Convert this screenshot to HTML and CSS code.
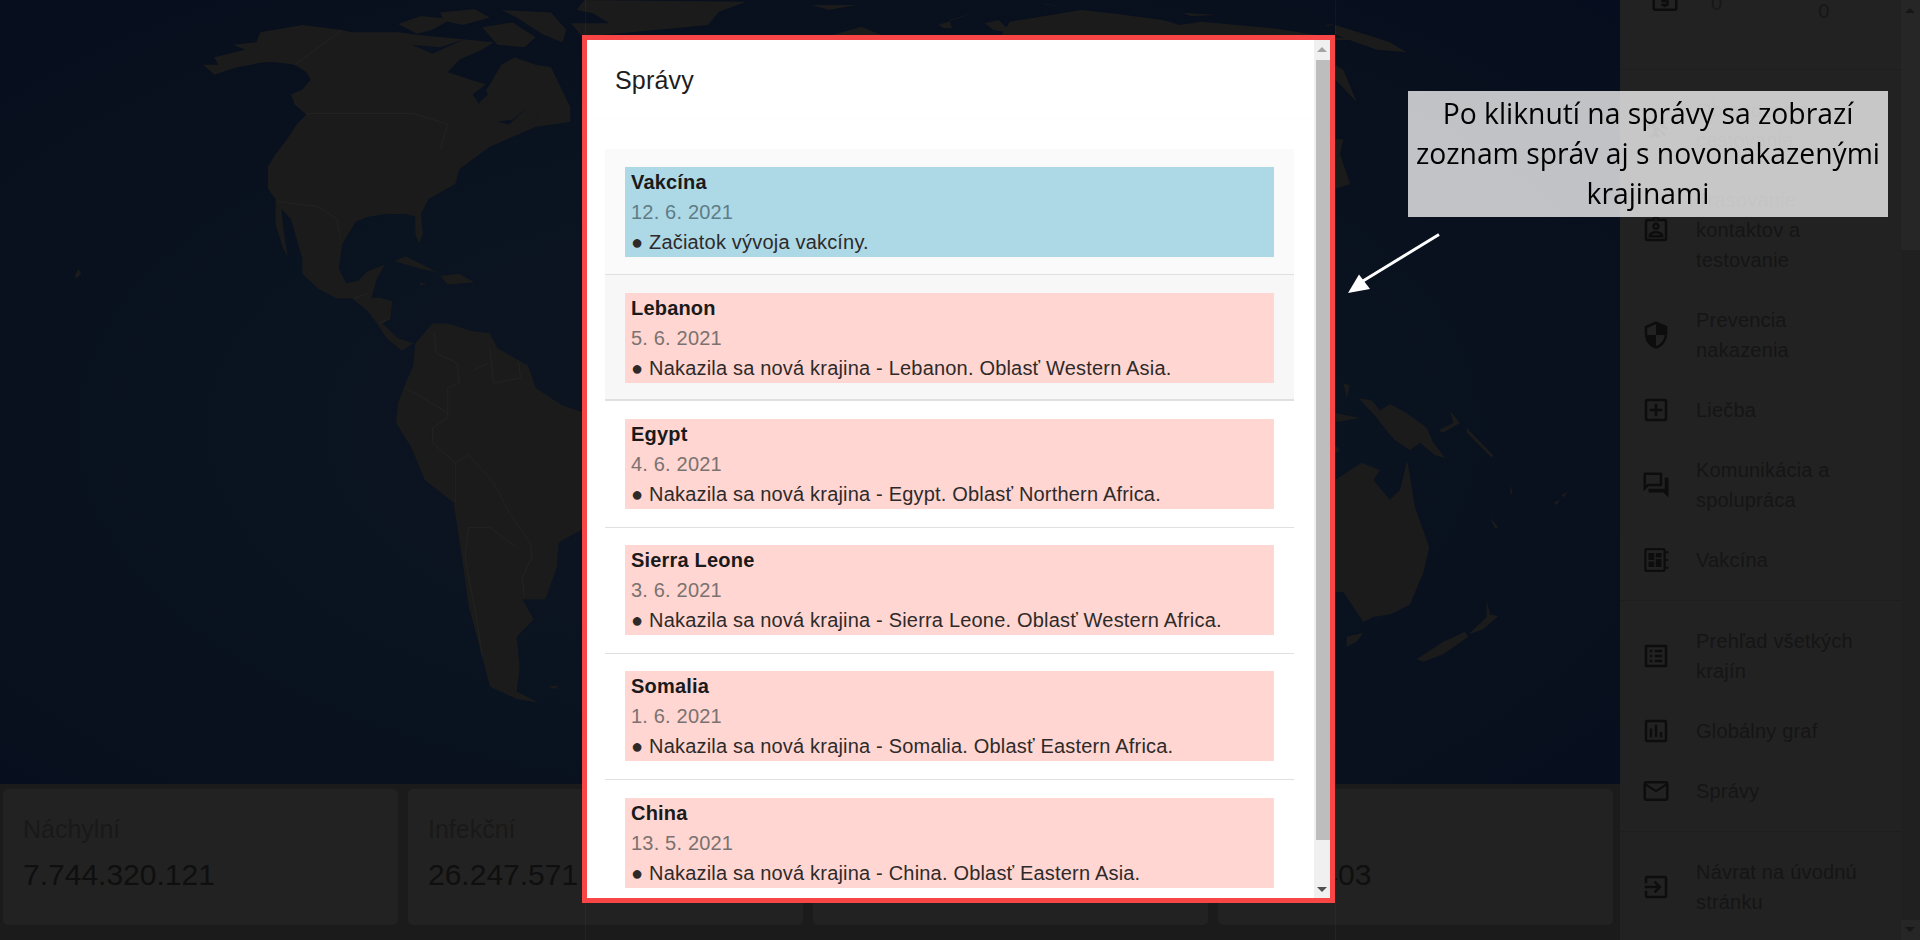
FILE: index.html
```html
<!DOCTYPE html>
<html lang="sk">
<head>
    <meta charset="UTF-8">
    <meta name="viewport" content="width=device-width, initial-scale=1.0">
    <title>Správy</title>
    <link rel="stylesheet" href="styles.css">
</head>
<body>

    <div class="app">
        <main class="main">
            <div class="map">
                <svg class="map-svg" viewBox="0 0 1620 784" aria-hidden="true">
                    <!-- Americas -->
                    <g transform="scale(.3827,.4975)">
                        <path class="land" d="M470 178L560 150 620 135 690 125 720 125 770 130 800 145 812 160 790 180 760 190 770 210 800 230 775 250 750 280 720 310 700 335 700 380 720 400 720 450 740 500 752 515 742 470 735 420 760 440 790 520 790 550 830 580 880 600 920 600 960 625 985 650 1010 680 1050 705 1080 690 1060 685 1040 680 1000 650 1020 640 1025 605 990 598 970 600 985 560 1005 532 960 545 935 565 905 570 885 540 895 490 930 445 965 435 1010 430 1060 430 1085 435 1085 470 1095 490 1105 470 1100 430 1120 400 1190 370 1200 340 1280 295 1340 275 1400 255 1490 245 1490 215 1440 135 1400 130 1345 115 1310 130 1280 170 1250 205 1235 190 1270 170 1170 145 1200 120 1260 100 1290 85 1090 70 1040 65 920 65 890 60 790 50 680 65 670 85 610 90 640 100 560 115 570 130 530 130 560 150z"/>
                        <path class="land" d="M1040 48L1100 32 1180 38 1130 60 1090 68zM1150 25L1240 18 1280 35 1210 50 1160 42zM1260 55L1340 45 1400 75 1370 95 1300 90zM1310 20L1440 25 1480 60 1470 85 1420 70 1350 35z"/>
                        <path class="land" d="M1030 525L1060 515 1100 530 1145 548 1100 540zM1150 555L1200 550 1240 568 1170 572zM1095 568L1115 570 1100 574zM200 560L212 550 205 540 195 555zM1430 1380L1460 1378 1450 1385zM1370 250L1410 225 1390 260z"/>
                        <path class="land" d="M1085 690L1130 650 1170 650 1230 665 1280 670 1300 700 1380 735 1400 780 1470 815 1530 830 1570 900 1570 1000 1520 1065 1460 1090 1455 1140 1425 1205 1365 1205 1395 1245 1350 1280 1358 1340 1350 1390 1408 1412 1350 1405 1280 1380 1260 1320 1225 1220 1205 1110 1185 1010 1110 965 1075 900 1035 850 1040 810 1060 770 1080 735z"/>
                        <path class="border" d="M895 60L770 130M800 228H1080L1170 250 1150 300M725 405L830 415 880 440 890 480M925 600L960 590M990 650L1020 640M1135 670L1140 710 1195 730 1200 770 1170 780 1170 840 1130 860 1130 890 1190 930 1190 1010M1060 780L1105 800 1170 830M1190 930L1225 915 1290 970 1330 1030 1385 1090 1390 1120 1365 1160 1370 1200M1225 1060L1280 1060 1350 1100M1225 1060L1215 1120 1245 1240 1260 1320M1280 700L1290 770 1360 760 1355 725M1235 745L1275 730"/>
                        <!-- lakes and the gulf of St. Lawrence -->
                        <path class="water" d="M1240 190L1265 172 1275 190 1250 208zM1155 1400L1160 1400zM1300 245L1340 240 1380 215 1330 250zM1075 90L1150 95 1210 80 1130 108z"/>
                    </g>
                    <!-- Greenland, Europe and Asia above the dialog -->
                    <g transform="translate(560,0) scale(.5484,.3333)">
                        <path class="land" d="M45 0L340 5 290 35 270 75 110 100 60 108 40 108 20 70 90 70 60 40 30 30zM460 15L540 15 490 30zM490 108L550 80 590 108zM690 75L760 35 710 60 715 85 700 85zM775 70L800 60 825 100 790 90zM820 65L950 30 1005 40 1100 60 1130 75 1170 65 1300 85 1400 110 1490 120 800 120zM870 8L920 20 890 15zM1135 38L1200 45 1150 48zM1395 75L1412 73 1400 79z"/>
                    </g>
                    <!-- Oceania and east Asia -->
                    <g transform="translate(1300,0) scale(.3333,.4975)">
                        <path class="land" d="M105 965L185 930 240 945 220 965 270 1005 300 985 322 925 345 1020 388 1100 370 1150 330 1215 270 1235 220 1240 190 1250 130 1190 105 1190z"/>
                        <path class="land" d="M175 800L215 805 240 825 270 812 320 830 380 860 400 890 435 920 405 915 360 890 330 905 285 885 265 870 225 835z"/>
                        <path class="land" d="M140 1280L190 1272 170 1290 140 1300zM350 1325L430 1290 495 1270 505 1280 430 1315 370 1330zM505 1275L560 1240 560 1205 570 1235 595 1238 550 1265zM570 1040L595 1060 585 1062zM760 1010L780 1005 770 1015zM785 995L805 988 790 1000zM500 860L580 915 575 920 500 870zM415 865L460 850 450 825 480 850 430 870zM630 975L638 990 632 995z"/>
                        <path class="land" d="M105 50L200 70 270 85 320 105 230 100 105 70zM105 130L130 140 170 205 120 170 105 160zM105 280L130 280 120 310 150 370 105 380zM130 770L150 775 140 800zM105 830L180 840 110 848zM105 895L120 905 105 912z"/>
                    </g>
                </svg>
            </div>

            <section class="stats">
                <div class="stat-card">
                    <p class="stat-label">Náchylní</p>
                    <p class="stat-value">7.744.320.121</p>
                </div>
                <div class="stat-card">
                    <p class="stat-label">Infekční</p>
                    <p class="stat-value">26.247.571</p>
                </div>
                <div class="stat-card">
                    <p class="stat-label">Zotavení</p>
                    <p class="stat-value">0</p>
                </div>
                <div class="stat-card">
                    <p class="stat-label">Mŕtvi</p>
                    <p class="stat-value">1.553.403</p>
                </div>
            </section>
        </main>

        <aside class="sidebar">
            <nav class="nav">
                <div class="nav-top">
                    <svg class="icon icon-money" viewBox="0 0 24 24"><path d="M11 17h2v-1h1c.55 0 1-.45 1-1v-3c0-.55-.45-1-1-1h-3v-1h4V8h-2V7h-2v1h-1c-.55 0-1 .45-1 1v3c0 .55.45 1 1 1h3v1H9v2h2v1zm9-13H4c-1.11 0-1.99.89-1.99 2L2 18c0 1.11.89 2 2 2h16c1.11 0 2-.89 2-2V6c0-1.11-.89-2-2-2zm0 14H4V6h16v12z"/></svg>
                    <span class="nav-count">0</span>
                    <span class="nav-count nav-count-low">0</span>
                </div>

                <ul class="nav-group">
                    <li class="nav-item">
                        <svg class="icon" viewBox="0 0 24 24"><path d="M13 9V3.5c0-.83-.67-1.5-1.5-1.5S10 2.67 10 3.5v3.68l7.83 7.83L21 16v-2l-8-5zM3 5.27l4.99 4.99L2 14v2l8-2.5V19l-2 1.5V22l3.5-1 3.5 1v-1.5L13 19v-3.73L18.73 21 20 19.73 4.27 4 3 5.27z"/></svg>
                        <span>Obmedzenia cestovania</span>
                    </li>
                    <li class="nav-item">
                        <svg class="icon" viewBox="0 0 24 24"><path d="M19 3h-4.18C14.4 1.84 13.3 1 12 1s-2.4.84-2.82 2H5c-1.1 0-2 .9-2 2v14c0 1.1.9 2 2 2h14c1.1 0 2-.9 2-2V5c0-1.1-.9-2-2-2zm-7-.25c.41 0 .75.34.75.75s-.34.75-.75.75-.75-.34-.75-.75.34-.75.75-.75zM19 19H5V5h14v14zM12 6c-1.65 0-3 1.35-3 3s1.35 3 3 3 3-1.35 3-3-1.35-3-3-3zm0 4c-.55 0-1-.45-1-1s.45-1 1-1 1 .45 1 1-.45 1-1 1zm-6 6.47V18h12v-1.53c0-2.5-3.97-3.58-6-3.58s-6 1.07-6 3.58zM8.31 16c.69-.56 2.38-1.12 3.69-1.12s3.01.56 3.69 1.12H8.31z"/></svg>
                        <span>Trasovanie kontaktov a testovanie</span>
                    </li>
                    <li class="nav-item">
                        <svg class="icon" viewBox="0 0 24 24"><path d="M12 1L3 5v6c0 5.55 3.84 10.74 9 12 5.16-1.26 9-6.45 9-12V5l-9-4zm0 10.99h7c-.53 4.12-3.28 7.79-7 8.94V12H5V6.3l7-3.11v8.8z"/></svg>
                        <span>Prevencia nakazenia</span>
                    </li>
                    <li class="nav-item">
                        <svg class="icon" viewBox="0 0 24 24"><path d="M19 3H5c-1.11 0-2 .9-2 2v14c0 1.1.89 2 2 2h14c1.1 0 2-.9 2-2V5c0-1.1-.9-2-2-2zm0 16H5V5h14v14zm-8-2h2v-4h4v-2h-4V7h-2v4H7v2h4z"/></svg>
                        <span>Liečba</span>
                    </li>
                    <li class="nav-item">
                        <svg class="icon" viewBox="0 0 24 24"><path d="M15 4v7H5.17L4 12.17V4h11m1-2H3c-.55 0-1 .45-1 1v14l4-4h10c.55 0 1-.45 1-1V3c0-.55-.45-1-1-1zm5 4h-2v9H6v2c0 .55.45 1 1 1h11l4 4V7c0-.55-.45-1-1-1z"/></svg>
                        <span>Komunikácia a spolupráca</span>
                    </li>
                    <li class="nav-item">
                        <svg class="icon" viewBox="0 0 24 24"><path fill-rule="evenodd" d="M4.400 2.400H18c1 0 1.800.8 1.800 1.800v15.600c0 1-.8 1.800-1.800 1.800H4.400c-1 0-1.800-.8-1.800-1.800V4.200c0-1 .8-1.800 1.800-1.800zm0 1.800v15.600H18V4.200H4.400zm1.600 2.200h4.600V12H6V6.400zm5.800 0h4.600V10h-4.600V6.400zM6 13.200h4.600v4.400H6v-4.400zm5.800-2h4.600v6.400h-4.600v-6.400zM20.200 5h1.600v1.600h-1.600V5zm0 6.200h1.600v1.600h-1.600v-1.600zm0 6.200h1.600V19h-1.600v-1.600z"/></svg>
                        <span>Vakcína</span>
                    </li>
                </ul>

                <ul class="nav-group">
                    <li class="nav-item">
                        <svg class="icon" viewBox="0 0 24 24"><path d="M19 5v14H5V5h14m1.1-2H3.900c-.5 0-.9.4-.9.9v16.200c0 .4.4.9.9.9h16.200c.4 0 .9-.5.9-.9V3.900c0-.5-.5-.9-.9-.9zM11 7h6v2h-6V7zm0 4h6v2h-6v-2zm0 4h6v2h-6zM7 7h2v2H7zm0 4h2v2H7zm0 4h2v2H7z"/></svg>
                        <span>Prehľad všetkých krajín</span>
                    </li>
                    <li class="nav-item">
                        <svg class="icon" viewBox="0 0 24 24"><path d="M19 3H5c-1.100 0-2 .9-2 2v14c0 1.100.9 2 2 2h14c1.100 0 2-.9 2-2V5c0-1.100-.9-2-2-2zm0 16H5V5h14v14zM7 10h2v7H7zm4-3h2v10h-2zm4 6h2v4h-2z"/></svg>
                        <span>Globálny graf</span>
                    </li>
                    <li class="nav-item">
                        <svg class="icon" viewBox="0 0 24 24"><path d="M22 6c0-1.100-.9-2-2-2H4c-1.100 0-2 .9-2 2v12c0 1.100.9 2 2 2h16c1.100 0 2-.9 2-2V6zm-2 0l-8 5-8-5h16zm0 12H4V8l8 5 8-5v10z"/></svg>
                        <span>Správy</span>
                    </li>
                </ul>

                <ul class="nav-group">
                    <li class="nav-item">
                        <svg class="icon" viewBox="0 0 24 24"><path d="M10.090 15.590L11.500 17l5-5-5-5-1.410 1.410L12.670 11H3v2h9.670l-2.580 2.590zM19 3H5c-1.110 0-2 .9-2 2v4h2V5h14v14H5v-4H3v4c0 1.100.89 2 2 2h14c1.100 0 2-.9 2-2V5c0-1.100-.9-2-2-2z"/></svg>
                        <span>Návrat na úvodnú stránku</span>
                    </li>
                </ul>
            </nav>

            <div class="nav-scrollbar">
                <span class="nav-arrow-up"></span>
                <span class="nav-thumb"></span>
                <span class="nav-arrow-down"></span>
            </div>
        </aside>
    </div>

    <!-- faint frame of the pasted screenshot, runs past the dialog -->
    <div class="frame-lines"></div>

    <div class="modal">
        <div class="modal-body">
            <h2 class="modal-title">Správy</h2>
            <div class="modal-card">
                <div class="news-row news-row-first">
                    <div class="news-box news-box-blue">
                        <strong>Vakcína</strong>
                        <p class="news-date">12. 6. 2021</p>
                        <p>● Začiatok vývoja vakcíny.</p>
                    </div>
                </div>
                <div class="news-row news-row-hover">
                    <div class="news-box">
                        <strong>Lebanon</strong>
                        <p class="news-date">5. 6. 2021</p>
                        <p>● Nakazila sa nová krajina - Lebanon. Oblasť Western Asia.</p>
                    </div>
                </div>
                <div class="news-row">
                    <div class="news-box">
                        <strong>Egypt</strong>
                        <p class="news-date">4. 6. 2021</p>
                        <p>● Nakazila sa nová krajina - Egypt. Oblasť Northern Africa.</p>
                    </div>
                </div>
                <div class="news-row">
                    <div class="news-box">
                        <strong>Sierra Leone</strong>
                        <p class="news-date">3. 6. 2021</p>
                        <p>● Nakazila sa nová krajina - Sierra Leone. Oblasť Western Africa.</p>
                    </div>
                </div>
                <div class="news-row">
                    <div class="news-box">
                        <strong>Somalia</strong>
                        <p class="news-date">1. 6. 2021</p>
                        <p>● Nakazila sa nová krajina - Somalia. Oblasť Eastern Africa.</p>
                    </div>
                </div>
                <div class="news-row">
                    <div class="news-box">
                        <strong>China</strong>
                        <p class="news-date">13. 5. 2021</p>
                        <p>● Nakazila sa nová krajina - China. Oblasť Eastern Asia.</p>
                    </div>
                </div>
            </div>
        </div>
        <div class="modal-scrollbar">
            <span class="modal-arrow-up"></span>
            <span class="modal-thumb"></span>
            <span class="modal-arrow-down"></span>
        </div>
    </div>

    <div class="callout">Po kliknutí na správy sa zobrazí zoznam správ aj s novonakazenými krajinami</div>

    <svg class="arrow" viewBox="0 0 100 70" aria-hidden="true">
        <line x1="93" y1="1.500" x2="12" y2="51" stroke="#fff" stroke-width="3"/>
        <polygon points="2,60 13,41.500 24,56" fill="#fff"/>
    </svg>

</body>
</html>
```

FILE: styles.css
```css
* {
    box-sizing: border-box;
}

html, body {
    height: 100%;
}

body {
    margin: 0;
    overflow: hidden;
    background-color: #1b1b1b;
    font-family: "Liberation Sans", Arial, sans-serif;
    font-size: 20px;
    line-height: 30px;
    letter-spacing: 0.19px;
    color: #151515;
}

p, ul, h2 {
    margin: 0;
    padding: 0;
}

ul {
    list-style: none;
}

.app {
    display: flex;
    height: 940px;
}

.main {
    flex: 1;
    display: flex;
    flex-direction: column;
    min-width: 0;
}

/* map */
.map {
    height: 784px;
    background: radial-gradient(ellipse at 48% 55%, #0c151f 0%, #0a1320 45%, #080f1d 80%, #060d1e 100%);
}

.map-svg {
    display: block;
    width: 100%;
    height: 100%;
}

.land {
    fill: #1b1b1b;
}

.water {
    fill: #0a1220;
}

.border {
    fill: none;
    stroke: #232323;
    stroke-width: 2;
}

/* stat cards */
.stats {
    flex: 1;
    display: grid;
    grid-template-columns: repeat(4, 395px);
    gap: 10px;
    padding: 5px 7px 15px 3px;
}

.stat-card {
    background-color: #222;
    border-radius: 5px;
    padding: 20px;
}

.stat-label {
    font-size: 25px;
    line-height: 40px;
    letter-spacing: 0;
    color: #191919;
}

.stat-value {
    margin-top: 6px;
    font-size: 30px;
    line-height: 40px;
    letter-spacing: 0;
    color: #0f0f0f;
}

/* sidebar */
.sidebar {
    display: flex;
    width: 300px;
    background-color: #222;
}

.nav {
    flex: 1;
    min-width: 0;
}

.nav-top {
    display: flex;
    height: 70px;
    padding-left: 30px;
    border-bottom: 1px solid #1e1e1e;
    overflow: hidden;
}

.nav-count {
    margin-top: -12px;
    margin-left: 31px;
    color: #171717;
}

.nav-count-low {
    margin-top: -4px;
    margin-left: 96px;
}

.nav-group {
    padding: 10px 0;
    border-bottom: 1px solid #1e1e1e;
}

.nav-group:last-child {
    border-bottom: none;
}

.nav-item {
    display: flex;
    align-items: center;
    gap: 25px;
    padding: 15px 0 15px 21px;
}

.nav-item span {
    width: 172px;
}

.icon {
    flex: none;
    width: 30px;
    height: 30px;
    fill: #0d0d0d;
}

.icon-money {
    margin-top: -14px;
}

.nav-scrollbar {
    position: relative;
    width: 19px;
    background-color: #262626;
}

.nav-thumb {
    position: absolute;
    top: 250px;
    bottom: 20px;
    left: 0;
    right: 0;
    background-color: #202020;
}

.nav-arrow-up, .nav-arrow-down {
    position: absolute;
    left: 4px;
    border-left: 5px solid transparent;
    border-right: 5px solid transparent;
}

.nav-arrow-up {
    top: 8px;
    border-bottom: 5px solid #161616;
}

.nav-arrow-down {
    bottom: 8px;
    border-top: 5px solid #161616;
}

.frame-lines {
    position: fixed;
    top: 0;
    left: 585px;
    width: 751px;
    height: 940px;
    border-left: 1px solid rgba(255, 255, 255, 0.035);
    border-right: 1px solid rgba(255, 255, 255, 0.035);
}

/* dialog */
.modal {
    position: fixed;
    top: 35px;
    left: 582px;
    display: flex;
    width: 753px;
    height: 868px;
    border: 5px solid #f84545;
    background-color: #fff;
    overflow: hidden;
}

.modal-body {
    flex: 1;
    min-width: 0;
    overflow: hidden;
}

.modal-title {
    height: 79px;
    padding: 20px 28px;
    font-size: 25px;
    line-height: 40px;
    font-weight: normal;
    letter-spacing: 0.19px;
    color: #1d1d1d;
}

.modal-card {
    height: 800px;
    padding: 30px 20px 0 18px;
    border-radius: 5px;
    box-shadow: 0 -1px 2px rgba(0, 0, 0, 0.012);
}

.news-row {
    padding: 17.600px 20px;
    border-bottom: 1px solid #e0e0e0;
}

.news-row-first {
    background-color: #fafafa;
}

.news-row-hover {
    background-color: #f7f7f7;
    border-bottom-width: 2px;
    padding-bottom: 16.600px;
}

.news-box {
    height: 90px;
    padding-left: 6px;
    background-color: #ffd6d1;
    color: #2e2a2a;
}

.news-box-blue {
    background-color: #add8e6;
}

.news-box strong {
    display: block;
    color: #1a1a1a;
}

.news-date {
    color: #7a7270;
}

.news-box-blue .news-date {
    color: #5f7c86;
}

.modal-scrollbar {
    position: relative;
    width: 16px;
    background-color: #f0f0f0;
}

.modal-thumb {
    position: absolute;
    top: 20px;
    bottom: 58px;
    left: 2px;
    right: 0;
    background-color: #bdbdbd;
}

.modal-arrow-up, .modal-arrow-down {
    position: absolute;
    left: 3px;
    border-left: 5px solid transparent;
    border-right: 5px solid transparent;
}

.modal-arrow-up {
    top: 7px;
    border-bottom: 5px solid #a3a3a3;
}

.modal-arrow-down {
    bottom: 6px;
    border-top: 5px solid #505050;
}

/* annotation over the screenshot */
.callout {
    position: fixed;
    top: 91px;
    left: 1408px;
    width: 480px;
    height: 126px;
    padding: 2px 2px;
    background-color: rgba(255, 255, 255, 0.75);
    font-family: "Open Sans", sans-serif;
    font-size: 28.300px;
    line-height: 40px;
    letter-spacing: 0;
    text-align: center;
    color: #000;
}

.arrow {
    position: fixed;
    top: 233px;
    left: 1346px;
    width: 100px;
    height: 70px;
}
```
